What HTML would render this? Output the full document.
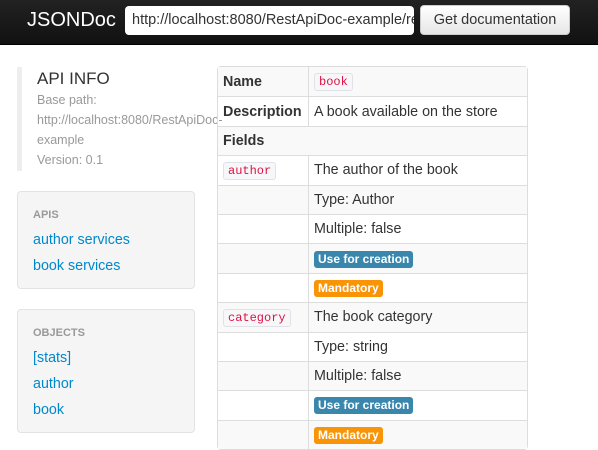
<!DOCTYPE html>
<html><head><style>
*{box-sizing:border-box}
body{margin:0;width:598px;height:445px;overflow:hidden;background:#fff;font-family:"Liberation Sans",sans-serif;font-size:14px;color:#333}
.nav{position:absolute;left:0;top:0;width:598px;height:45px;background:linear-gradient(#222,#111);border-bottom:1px solid #000}
.brand{position:absolute;left:27px;top:8px;font-size:20px;color:#fff;line-height:24px}
.inp{position:absolute;left:125px;top:6px;width:289px;height:29px;background:#fff;border-radius:4px;font-size:14.5px;line-height:29px;padding-left:7px;white-space:nowrap;overflow:hidden;color:#333}
.btn{position:absolute;left:420px;top:5px;width:150px;height:30px;background:linear-gradient(#fff,#e6e6e6);border:1px solid #ccc;border-radius:4px;text-align:center;line-height:28px;color:#333;font-size:14.5px}
.info{position:absolute;left:17px;top:67px;height:104px;border-left:5px solid #eee;padding-left:15px;width:210px}
.info h4{margin:0;font-size:17px;font-weight:normal;line-height:22px;margin-top:1px}
.info p{margin:0;font-size:12.5px;color:#999;line-height:20px;white-space:nowrap}
.well{position:absolute;left:17px;width:178px;background:#f5f5f5;border:1px solid #e3e3e3;border-radius:4px;padding:0 15px}
.well .h{font-size:11px;font-weight:bold;color:#999;margin-top:17px;line-height:12px}
.well a{display:block;color:#08c;text-decoration:none;line-height:26px;font-size:14.3px}
table{position:absolute;left:217px;top:66px;width:311px;border-collapse:separate;border-spacing:0;border:1px solid #ddd;border-radius:4px;font-size:14.3px}
td{border-top:1px solid #ddd;height:29.4px;padding:0 5px;vertical-align:middle;line-height:18px}
tr:first-child td{border-top:none}
td+td{border-left:1px solid #ddd}
tr:nth-child(odd) td{background:#f9f9f9}
td.k{width:90px;font-weight:bold}
code{font-family:"Liberation Mono",monospace;font-size:12px;color:#d14;background:#f7f7f9;border:1px solid #e1e1e8;border-radius:3px;padding:1px 4px}
.b{display:inline-block;font-size:12px;font-weight:bold;color:#fff;border-radius:3px;padding:0 4px;line-height:17px}
.bl{background:#3a87ad}.or{background:#f89406}
</style></head><body>
<div class="nav"><div class="brand">JSONDoc</div><div class="inp">http://localhost:8080/RestApiDoc-example/rest</div><div class="btn">Get documentation</div></div>
<div class="info"><h4>API INFO</h4><p>Base path:</p><p>http://localhost:8080/RestApiDoc-</p><p>example</p><p>Version: 0.1</p></div>
<div class="well" style="top:191px;height:98px"><div class="h">APIS</div><div style="margin-top:6px"><a>author services</a><a>book services</a></div></div>
<div class="well" style="top:309px;height:124px"><div class="h">OBJECTS</div><div style="margin-top:6px"><a>[stats]</a><a>author</a><a>book</a></div></div>
<table>
<tr><td class="k">Name</td><td><code>book</code></td></tr>
<tr><td class="k">Description</td><td>A book available on the store</td></tr>
<tr><td class="k" colspan="2">Fields</td></tr>
<tr><td><code>author</code></td><td>The author of the book</td></tr>
<tr><td></td><td>Type: Author</td></tr>
<tr><td></td><td>Multiple: false</td></tr>
<tr><td></td><td><span class="b bl">Use for creation</span></td></tr>
<tr><td></td><td><span class="b or">Mandatory</span></td></tr>
<tr><td><code>category</code></td><td>The book category</td></tr>
<tr><td></td><td>Type: string</td></tr>
<tr><td></td><td>Multiple: false</td></tr>
<tr><td></td><td><span class="b bl">Use for creation</span></td></tr>
<tr><td></td><td><span class="b or">Mandatory</span></td></tr>
</table>
</body></html>
